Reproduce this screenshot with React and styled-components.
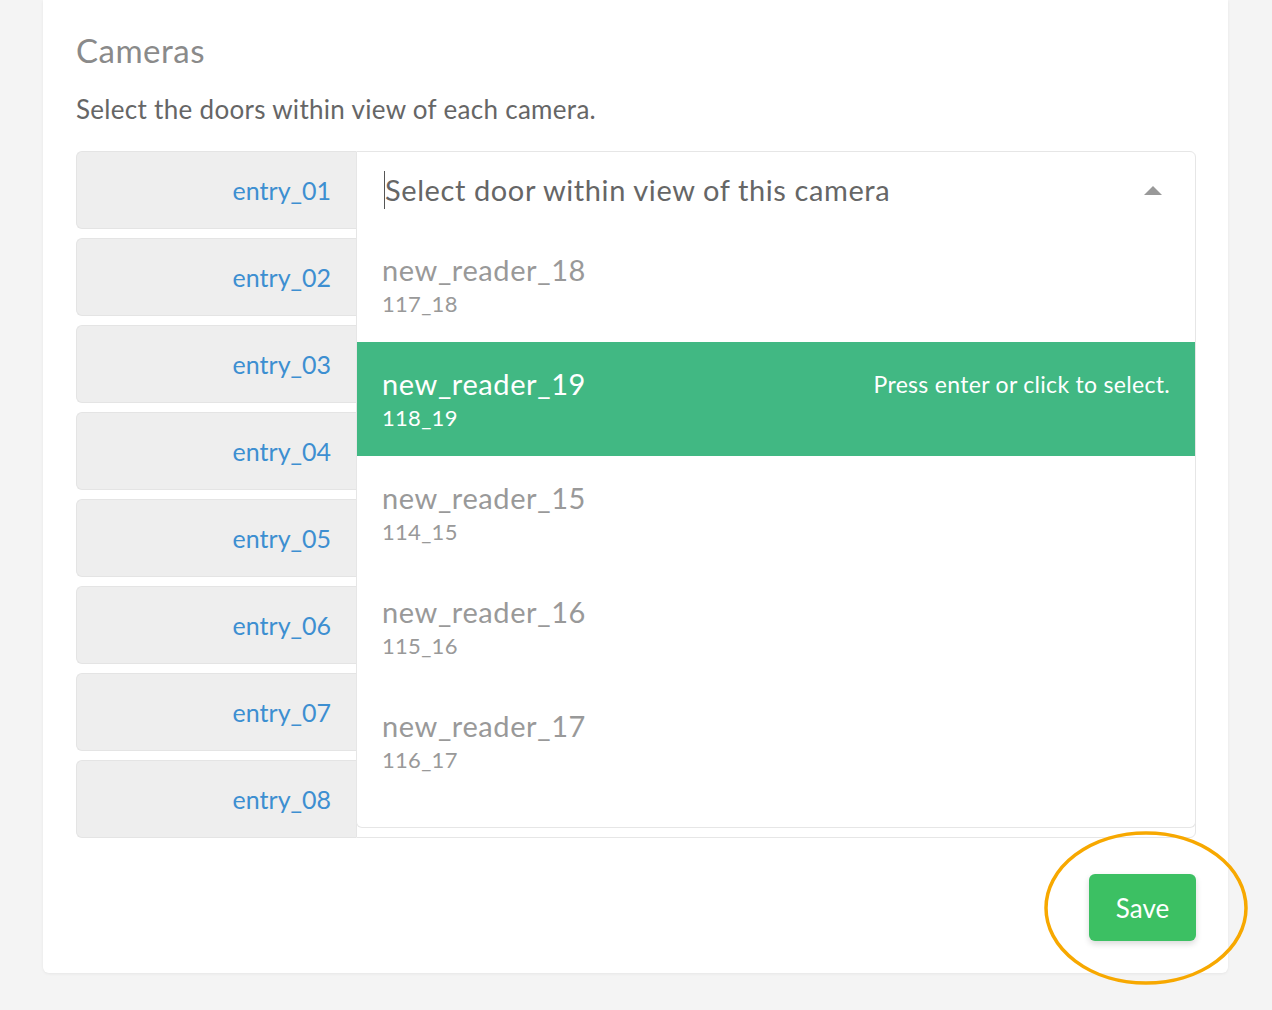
import React from 'react'
import styled, { createGlobalStyle } from 'styled-components'

const GlobalStyle = createGlobalStyle`
  html, body {
    margin: 0;
    padding: 0;
    background: #f4f4f4;
    font-family: 'Lato', 'Noto Sans', sans-serif;
  }
`

const Page = styled.div`
  padding: 0 44px 37px 43px;
`

const Card = styled.section`
  background: #fff;
  border-radius: 0 0 6px 6px;
  box-shadow: 0 1px 3px rgba(0, 0, 0, 0.06);
  padding: 30px 32px 32px 33px;
`

const Title = styled.h2`
  margin: 0;
  font-size: 33px;
  line-height: 40px;
  font-weight: 400;
  letter-spacing: 0.5px;
  color: #8a8a8a;
`

const Lead = styled.p`
  margin: 23px 0 26px;
  font-size: 26px;
  line-height: 32px;
  letter-spacing: 0.3px;
  color: #666;
`

const Rows = styled.div`
  display: flex;
  flex-direction: column;
  gap: 9px;
`

const Row = styled.div`
  position: relative;
  display: flex;
  height: 78px;
`

const Label = styled.div`
  width: 280px;
  flex: none;
  box-sizing: border-box;
  display: flex;
  align-items: center;
  justify-content: flex-end;
  padding-right: 25px;
  background: #eee;
  border: 1px solid #e4e4e4;
  border-right: none;
  border-radius: 6px 0 0 6px;
  font-size: 25px;
  color: #3d8fd1;
`

const Select = styled.div`
  flex: 1;
  box-sizing: border-box;
  display: flex;
  align-items: center;
  padding: 0 33px 0 27px;
  background: #fff;
  border: 1px solid #e6e6e6;
  border-radius: ${p => (p.$open ? '0 6px 0 0' : '0 6px 6px 0')};
`

const Placeholder = styled.span`
  flex: 1;
  font-size: 29px;
  letter-spacing: 0.6px;
  color: #666;
  border-left: 1px solid #555;
  line-height: 38px;
`

const Arrow = styled.span`
  width: 0;
  height: 0;
  border-left: 9px solid transparent;
  border-right: 9px solid transparent;
  border-bottom: 9px solid #999;
`

const Menu = styled.ul`
  position: absolute;
  top: 77px;
  left: 280px;
  right: 0;
  height: 599px;
  margin: 0;
  padding: 0;
  list-style: none;
  overflow: hidden;
  background: #fff;
  border: 1px solid #e6e6e6;
  border-top: none;
  border-radius: 0 0 6px 6px;
  z-index: 2;
`

const Option = styled.li`
  height: 114px;
  box-sizing: border-box;
  display: flex;
  justify-content: space-between;
  padding: 24px 25px 0 25px;
  background: ${p => (p.$active ? '#41b883' : '#fff')};
  color: ${p => (p.$active ? '#fff' : '#999')};
`

const OptionName = styled.div`
  font-size: 29px;
  line-height: 36px;
  letter-spacing: 0.6px;
`

const OptionCode = styled.div`
  margin-top: 2px;
  font-size: 22px;
  line-height: 28px;
  letter-spacing: 0.3px;
`

const Hint = styled.span`
  font-size: 23px;
  line-height: 36px;
  letter-spacing: 0.3px;
`

const Footer = styled.div`
  display: flex;
  justify-content: flex-end;
  margin-top: 36px;
`

const SaveWrap = styled.div`
  position: relative;
`

const SaveButton = styled.button`
  width: 107px;
  height: 67px;
  border: none;
  border-radius: 6px;
  background: #3cc063;
  color: #fff;
  font-family: inherit;
  font-size: 26px;
  box-shadow: 0 3px 6px rgba(0, 0, 0, 0.15);
`

const Ring = styled.svg`
  position: absolute;
  left: -46px;
  top: -44px;
  pointer-events: none;
  overflow: visible;
`

const entries = ['entry_01', 'entry_02', 'entry_03', 'entry_04', 'entry_05', 'entry_06', 'entry_07', 'entry_08']

const doors = [
  { name: 'new_reader_18', code: '117_18' },
  { name: 'new_reader_19', code: '118_19', active: true },
  { name: 'new_reader_15', code: '114_15' },
  { name: 'new_reader_16', code: '115_16' },
  { name: 'new_reader_17', code: '116_17' },
]

export default function App() {
  return (
    <>
      <GlobalStyle />
      <Page>
        <Card>
          <Title>Cameras</Title>
          <Lead>Select the doors within view of each camera.</Lead>
          <Rows>
            {entries.map((entry, i) => (
              <Row key={entry}>
                <Label>{entry}</Label>
                <Select $open={i === 0}>
                  {i === 0 && (
                    <>
                      <Placeholder>Select door within view of this camera</Placeholder>
                      <Arrow />
                    </>
                  )}
                </Select>
                {i === 0 && (
                  <Menu>
                    {doors.map(d => (
                      <Option key={d.name} $active={d.active}>
                        <div>
                          <OptionName>{d.name}</OptionName>
                          <OptionCode>{d.code}</OptionCode>
                        </div>
                        {d.active && <Hint>Press enter or click to select.</Hint>}
                      </Option>
                    ))}
                  </Menu>
                )}
              </Row>
            ))}
          </Rows>
          <Footer>
            <SaveWrap>
              <SaveButton>Save</SaveButton>
              <Ring width="206" height="156" viewBox="0 0 206 156">
                <ellipse cx="103" cy="78" rx="100" ry="75" fill="none" stroke="#f7a800" strokeWidth="3.5" />
              </Ring>
            </SaveWrap>
          </Footer>
        </Card>
      </Page>
    </>
  )
}
